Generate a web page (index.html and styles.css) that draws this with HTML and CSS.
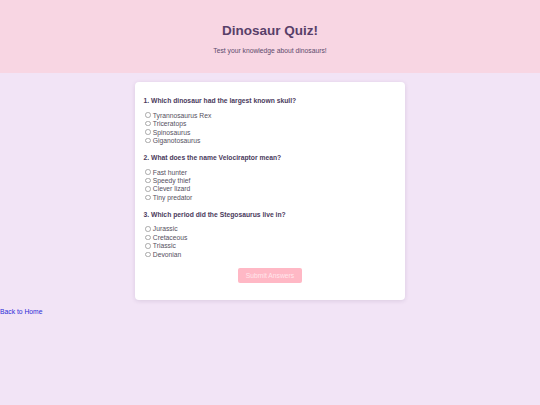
FILE: index.html
```html
<!DOCTYPE html>
<html lang="en">
<head>
<meta charset="utf-8">
<title>Dinosaur Quiz!</title>
<link rel="stylesheet" href="styles.css">
</head>
<body>
<header class="site-header">
  <h1 class="title">Dinosaur Quiz!</h1>
  <p class="subtitle">Test your knowledge about dinosaurs!</p>
</header>
<main class="quiz-card">
  <form class="quiz-form">
    <div class="question">
      <p class="question-text">1. Which dinosaur had the largest known skull?</p>
      <label class="option"><input type="radio" name="q1" class="radio"> Tyrannosaurus Rex</label>
      <label class="option"><input type="radio" name="q1" class="radio"> Triceratops</label>
      <label class="option"><input type="radio" name="q1" class="radio"> Spinosaurus</label>
      <label class="option"><input type="radio" name="q1" class="radio"> Giganotosaurus</label>
    </div>
    <div class="question">
      <p class="question-text">2. What does the name Velociraptor mean?</p>
      <label class="option"><input type="radio" name="q2" class="radio"> Fast hunter</label>
      <label class="option"><input type="radio" name="q2" class="radio"> Speedy thief</label>
      <label class="option"><input type="radio" name="q2" class="radio"> Clever lizard</label>
      <label class="option"><input type="radio" name="q2" class="radio"> Tiny predator</label>
    </div>
    <div class="question">
      <p class="question-text">3. Which period did the Stegosaurus live in?</p>
      <label class="option"><input type="radio" name="q3" class="radio"> Jurassic</label>
      <label class="option"><input type="radio" name="q3" class="radio"> Cretaceous</label>
      <label class="option"><input type="radio" name="q3" class="radio"> Triassic</label>
      <label class="option"><input type="radio" name="q3" class="radio"> Devonian</label>
    </div>
    <div class="actions">
      <button type="button" class="submit-btn">Submit Answers</button>
    </div>
  </form>
</main>
<a href="#" class="back-link">Back to Home</a>
</body>
</html>
```

FILE: styles.css
```css
html, body {
  margin: 0;
  padding: 0;
}

body {
  background: #f2e4f6;
  font-family: "Liberation Sans", Arial, sans-serif;
  font-size: 6.75px;
  color: #4a3b57;
}

.site-header {
  background: #f8d6e3;
  text-align: center;
  padding: 13.5px 8px 12.3px;
}

.title {
  font-size: 13.5px;
  font-weight: bold;
  color: #583f69;
  margin: 9px 0;
}

.subtitle {
  font-size: 6.75px;
  color: #5c4a6b;
  margin: 9px 0 6.75px;
}

.quiz-card {
  display: block;
  width: 253px;
  margin: 9.5px auto 0;
  padding: 8.4px;
  background: #ffffff;
  border-radius: 4px;
  box-shadow: 0 1px 4px rgba(80, 50, 100, 0.14);
}

.quiz-form {
  margin: 0;
}

.question {
  margin-bottom: 9.4px;
}

.question-text {
  font-weight: bold;
  color: #4a3a5c;
  margin: 6.75px 0;
}

.option {
  display: flex;
  align-items: center;
  height: 8.44px;
  color: #555060;
}

.radio {
  appearance: none;
  -webkit-appearance: none;
  box-sizing: border-box;
  width: 5.5px;
  height: 5.5px;
  margin: 0 1.9px 0 1.9px;
  border: 0.5px solid #a8a8a8;
  border-radius: 50%;
  background: #fff;
  flex: none;
}

.actions {
  text-align: center;
  margin-bottom: 8.5px;
}

.submit-btn {
  font-family: "Liberation Sans", Arial, sans-serif;
  font-size: 6.75px;
  line-height: 7.6px;
  padding: 3.7px 7.6px;
  border: none;
  border-radius: 2px;
  background: #ffb8c5;
  color: #ffe6ec;
  cursor: pointer;
}

.back-link {
  display: inline-block;
  margin-top: 8.4px;
  color: #2d2dd6;
  font-size: 6.75px;
}
```
